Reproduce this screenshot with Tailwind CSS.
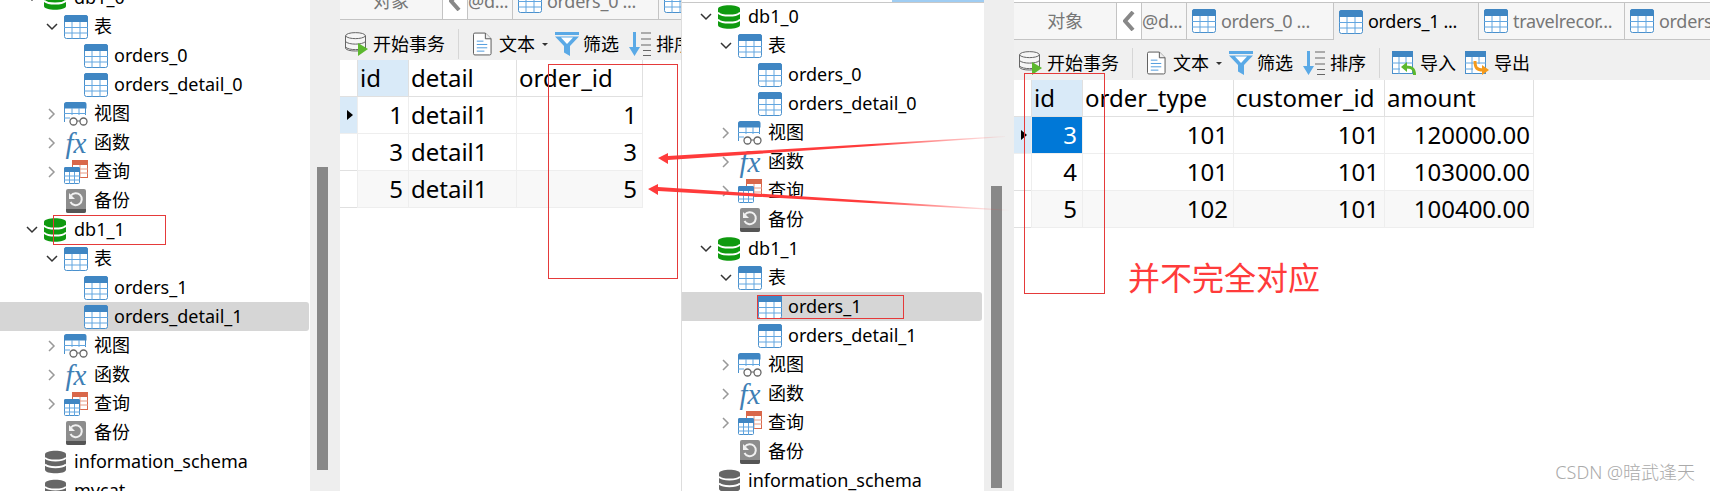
<!DOCTYPE html>
<html>
<head>
<meta charset="utf-8" />
<script src="https://cdn.jsdelivr.net/npm/@tailwindcss/browser@4"></script>
<title>Navicat</title>
</head>
<body class="bg-white">
<svg class="hidden" xmlns="http://www.w3.org/2000/svg">
  <symbol id="tbl" viewBox="0 0 24 24">
    <rect x=".5" y=".5" width="23" height="23" rx="2" fill="#fff" stroke="#4a90cc"/>
    <path d="M0 7V2.500a2.500 2.500 0 0 1 2.500-2.500h19a2.500 2.500 0 0 1 2.500 2.500V7z" fill="#3f86c3"/>
    <path d="M0 12.500h24M0 18h24M8 7v17M16 7v17" stroke="#62a6e0" fill="none"/>
  </symbol>
  <symbol id="db" viewBox="0 0 22 24">
    <path d="M0 4c0-5 22-5 22 0v16c0 5-22 5-22 0z" fill="currentColor"/>
    <path d="M0 7.500c3 4 19 4 22 0M0 14.500c3 4 19 4 22 0" stroke="#fff" stroke-width="2" fill="none"/>
  </symbol>
  <symbol id="view" viewBox="0 0 24 24">
    <path d="M.5 20V3a2 2 0 0 1 2-2h17a2 2 0 0 1 2 2v10" fill="#fff" stroke="#4a90cc"/>
    <path d="M0 6.500V2.500a2.500 2.500 0 0 1 2.500-2.500h18a2 2 0 0 1 2 2v4.500z" fill="#3f86c3"/>
    <path d="M0 11.500h22M0 16h6M8 6v7M15 6v7" stroke="#62a6e0" fill="none"/>
    <circle cx="9.500" cy="19.500" r="3.500" fill="#fff" stroke="#666" stroke-width="1.300"/>
    <circle cx="19.500" cy="19.500" r="3.500" fill="#fff" stroke="#666" stroke-width="1.300"/>
    <path d="M13 19h3" stroke="#666"/>
  </symbol>
  <symbol id="query" viewBox="0 0 24 24">
    <rect x="8.500" y=".5" width="15" height="17" fill="#fff" stroke="#d9674a"/>
    <rect x="8" y="0" width="16" height="5" fill="#d9674a"/>
    <path d="M8 9h16M8 13h16M16 5v13" stroke="#e59a84" fill="none"/>
    <rect x=".5" y="7.500" width="15" height="16" rx="1" fill="#fff" stroke="#4a90cc"/>
    <path d="M0 12V8.500a1.500 1.500 0 0 1 1.500-1.500h13a1.500 1.500 0 0 1 1.500 1.500V12z" fill="#3f86c3"/>
    <path d="M0 16h16M0 20h16M5.500 12v12M10.500 12v12" stroke="#62a6e0" fill="none"/>
  </symbol>
  <symbol id="backup" viewBox="0 0 20 24">
    <rect width="20" height="24" rx="2" fill="#8d8d8d"/>
    <path d="M0 20h20v2a2 2 0 0 1-2 2H2a2 2 0 0 1-2-2z" fill="#555"/>
    <path d="M5 6.500A6 6 0 1 1 4.500 13" stroke="#f1f1f1" stroke-width="2" fill="none"/>
    <path d="M3 4v6h6z" fill="#f1f1f1"/>
  </symbol>
  <symbol id="start" viewBox="0 0 23 24">
    <path d="M.5 4c0-4.500 20-4.500 20 0v12c0 4-20 4-20 0z" fill="#f5f5f5" stroke="#666"/>
    <path d="M.5 4c3 3.500 17 3.500 20 0M.5 9.500c3 3.500 17 3.500 20 0M.5 15c3 3.500 17 3.500 20 0" stroke="#666" fill="none"/>
    <path d="M13 11l10 6-10 7z" fill="#5cb82e"/>
  </symbol>
  <symbol id="doc" viewBox="0 0 20 24">
    <path d="M.5 2a1.500 1.500 0 0 1 1.500-1.500h11l6 6V22a1.500 1.500 0 0 1-1.500 1.500H2A1.500 1.500 0 0 1 .5 22z" fill="#fff" stroke="#555"/>
    <path d="M13 .5v6h6" fill="#eee" stroke="#555"/>
    <path d="M4 9h7M4 12.500h11M4 16h11M4 19.500h8" stroke="#4a98dc" fill="none"/>
  </symbol>
  <symbol id="filter" viewBox="0 0 24 24">
    <path d="M0 0h24v3H0z" fill="#5aa9e6"/>
    <path d="M0 4.500h24L15 14v10l-6-3.500V14z" fill="#5aa9e6"/>
    <path d="M6 5.500h12L12 12z" fill="#fff"/>
  </symbol>
  <symbol id="sort" viewBox="0 0 24 24">
    <path d="M5 0h3v15h4L6.500 24 1 15h4z" fill="#5aa9e6"/>
    <path d="M13 1h10M13 7h10M13 13h10M15 18.500h8M15 23.500h8" stroke="#666" fill="none"/>
  </symbol>
  <symbol id="imp" viewBox="0 0 24 24">
    <rect x=".5" y=".5" width="20" height="22" fill="#fff" stroke="#4a90cc"/>
    <rect width="21" height="6" fill="#3f86c3"/>
    <path d="M0 12h21M0 18h8M7 6v17M14 6v7" stroke="#62a6e0" fill="none"/>
    <path d="M22.500 24c0-6-2-8-9-8" stroke="#5cb82e" stroke-width="3" fill="none"/>
    <path d="M15 11l-6 5 6 5z" fill="#5cb82e"/>
  </symbol>
  <symbol id="exp" viewBox="0 0 24 24">
    <rect x=".5" y=".5" width="20" height="22" fill="#fff" stroke="#4a90cc"/>
    <rect width="21" height="6" fill="#3f86c3"/>
    <path d="M0 12h21M0 18h8M7 6v17M14 6v7" stroke="#62a6e0" fill="none"/>
    <path d="M10 10c0 7 2 9 8 9" stroke="#f59a1b" stroke-width="3" fill="none"/>
    <path d="M17 14l7 5-7 5z" fill="#f59a1b"/>
  </symbol>
  <symbol id="open" viewBox="0 0 12 8"><path d="M1 1l5 5 5-5" stroke="#333" stroke-width="1.500" fill="none"/></symbol>
  <symbol id="closed" viewBox="0 0 8 12"><path d="M1 1l5 5-5 5" stroke="#999" stroke-width="1.500" fill="none"/></symbol>
</svg>

<div class="relative w-[1710px] h-[491px] overflow-hidden flex font-['Noto_Sans','Noto_Sans_CJK_SC',sans-serif] text-black">

  <!-- left tree -->
  <div class="w-[310px] shrink-0 -mt-[17px] text-[18px] whitespace-nowrap">
    <div class="flex items-center h-[29px] pl-[20px]"><span class="w-[24px] flex justify-center"><svg class="w-[12px] h-[8px]"><use href="#open"/></svg></span><svg class="w-[22px] h-[24px] text-[#0f9a0f]"><use href="#db"/></svg><span class="ml-[8px]">db1_0</span></div>
    <div class="flex items-center h-[29px] pl-[40px]"><span class="w-[24px] flex justify-center"><svg class="w-[12px] h-[8px]"><use href="#open"/></svg></span><svg class="w-[24px] h-[24px]"><use href="#tbl"/></svg><span class="ml-[6px]">表</span></div>
    <div class="flex items-center h-[29px] pl-[84px]"><svg class="w-[24px] h-[24px]"><use href="#tbl"/></svg><span class="ml-[6px]">orders_0</span></div>
    <div class="flex items-center h-[29px] pl-[84px]"><svg class="w-[24px] h-[24px]"><use href="#tbl"/></svg><span class="ml-[6px]">orders_detail_0</span></div>
    <div class="flex items-center h-[29px] pl-[40px]"><span class="w-[24px] flex justify-center"><svg class="w-[8px] h-[12px]"><use href="#closed"/></svg></span><svg class="w-[24px] h-[24px]"><use href="#view"/></svg><span class="ml-[6px]">视图</span></div>
    <div class="flex items-center h-[29px] pl-[40px]"><span class="w-[24px] flex justify-center"><svg class="w-[8px] h-[12px]"><use href="#closed"/></svg></span><span class="w-[24px] text-center italic text-[29px] leading-[24px] text-[#3f7fb5] font-['Liberation_Serif',serif]">fx</span><span class="ml-[6px]">函数</span></div>
    <div class="flex items-center h-[29px] pl-[40px]"><span class="w-[24px] flex justify-center"><svg class="w-[8px] h-[12px]"><use href="#closed"/></svg></span><svg class="w-[24px] h-[24px]"><use href="#query"/></svg><span class="ml-[6px]">查询</span></div>
    <div class="flex items-center h-[29px] pl-[66px]"><svg class="w-[20px] h-[24px]"><use href="#backup"/></svg><span class="ml-[8px]">备份</span></div>
    <div class="flex items-center h-[29px] pl-[20px]"><span class="w-[24px] flex justify-center"><svg class="w-[12px] h-[8px]"><use href="#open"/></svg></span><svg class="w-[22px] h-[24px] text-[#0f9a0f]"><use href="#db"/></svg><span class="ml-[8px]">db1_1</span></div>
    <div class="flex items-center h-[29px] pl-[40px]"><span class="w-[24px] flex justify-center"><svg class="w-[12px] h-[8px]"><use href="#open"/></svg></span><svg class="w-[24px] h-[24px]"><use href="#tbl"/></svg><span class="ml-[6px]">表</span></div>
    <div class="flex items-center h-[29px] pl-[84px]"><svg class="w-[24px] h-[24px]"><use href="#tbl"/></svg><span class="ml-[6px]">orders_1</span></div>
    <div class="flex items-center h-[29px] pl-[84px] mr-px rounded-r-[3px] bg-[#d6d6d6]"><svg class="w-[24px] h-[24px]"><use href="#tbl"/></svg><span class="ml-[6px]">orders_detail_1</span></div>
    <div class="flex items-center h-[29px] pl-[40px]"><span class="w-[24px] flex justify-center"><svg class="w-[8px] h-[12px]"><use href="#closed"/></svg></span><svg class="w-[24px] h-[24px]"><use href="#view"/></svg><span class="ml-[6px]">视图</span></div>
    <div class="flex items-center h-[29px] pl-[40px]"><span class="w-[24px] flex justify-center"><svg class="w-[8px] h-[12px]"><use href="#closed"/></svg></span><span class="w-[24px] text-center italic text-[29px] leading-[24px] text-[#3f7fb5] font-['Liberation_Serif',serif]">fx</span><span class="ml-[6px]">函数</span></div>
    <div class="flex items-center h-[29px] pl-[40px]"><span class="w-[24px] flex justify-center"><svg class="w-[8px] h-[12px]"><use href="#closed"/></svg></span><svg class="w-[24px] h-[24px]"><use href="#query"/></svg><span class="ml-[6px]">查询</span></div>
    <div class="flex items-center h-[29px] pl-[66px]"><svg class="w-[20px] h-[24px]"><use href="#backup"/></svg><span class="ml-[8px]">备份</span></div>
    <div class="flex items-center h-[29px] pl-[45px]"><svg class="w-[21px] h-[24px] text-[#666]"><use href="#db"/></svg><span class="ml-[8px]">information_schema</span></div>
    <div class="flex items-center h-[29px] pl-[45px]"><svg class="w-[21px] h-[24px] text-[#666]"><use href="#db"/></svg><span class="ml-[8px]">mycat</span></div>
  </div>
  <div class="w-[30px] shrink-0 bg-[#eeeeee]"><div class="w-[11px] ml-[7px] mt-[167px] h-[303px] bg-[#888888]"></div></div>

  <!-- left data pane -->
  <div class="w-[341px] shrink-0 overflow-hidden -mt-[18px]">
    <div class="flex h-[38px] bg-[#f0f0f0] border-y border-[#c4c4c4] text-[18px] tracking-[-0.3px] whitespace-nowrap">
      <div class="w-[103px] shrink-0 bg-[#f6f6f6] border-r border-[#c4c4c4] flex items-center justify-center text-[#777]">对象</div>
      <div class="w-[25px] shrink-0 bg-white border-r border-[#c4c4c4] flex items-center justify-center"><svg class="w-[12px] h-[20px]" viewBox="0 0 12 20"><path d="M10 1L2 10l8 9" stroke="#888" stroke-width="4" fill="none"/></svg></div>
      <div class="w-[44px] shrink-0 bg-[#f6f6f6] flex items-center text-[#777]">@d...</div>
      <div class="w-[146px] shrink-0 bg-[#f6f6f6] border-l border-[#c4c4c4] flex items-center pl-[5px] text-[#777]"><svg class="w-[24px] h-[24px] mr-[5px]"><use href="#tbl"/></svg>orders_0 ...</div>
      <div class="w-[146px] shrink-0 bg-[#f6f6f6] border-l border-[#c4c4c4] flex items-center pl-[5px]"><svg class="w-[24px] h-[24px]"><use href="#tbl"/></svg></div>
    </div>
    <div class="flex items-center h-[40px] pt-[8px] bg-[#f0f0f0] text-[18px] whitespace-nowrap">
      <svg class="w-[23px] h-[24px] ml-[5px] shrink-0"><use href="#start"/></svg><span class="ml-[5px] shrink-0">开始事务</span>
      <span class="w-px h-[30px] bg-[#d6d6d6] ml-[13px] shrink-0"></span>
      <svg class="w-[19px] h-[24px] ml-[14px] shrink-0"><use href="#doc"/></svg><span class="ml-[7px] shrink-0">文本</span>
      <span class="ml-[7px] shrink-0 border-x-[3px] border-x-transparent border-t-[3px] border-t-[#333]"></span>
      <svg class="w-[24px] h-[24px] ml-[7px] shrink-0"><use href="#filter"/></svg><span class="ml-[4px] shrink-0">筛选</span>
      <svg class="w-[24px] h-[24px] ml-[9px] shrink-0"><use href="#sort"/></svg><span class="ml-[4px] shrink-0">排序</span>
    </div>
    <div class="grid grid-cols-[17px_52px_108px_126px] auto-rows-[37px] text-[24px] leading-[36px] w-max">
      <div class="border-b border-[#e0e0e0] bg-white"></div>
      <div class="border-b border-r border-l border-[#e0e0e0] bg-[#d9eaf8] pl-[2px]">id</div>
      <div class="border-b border-r border-[#e0e0e0] pl-[2px]">detail</div>
      <div class="border-b border-r border-[#e0e0e0] pl-[2px]">order_id</div>

      <div class="border-b border-[#eeeeee] bg-[#d9eaf8] flex items-center pl-[7px]"><span class="border-y-[5px] border-y-transparent border-l-[6px] border-l-black"></span></div>
      <div class="border-b border-r border-l border-[#eeeeee] text-right pr-[5px]">1</div>
      <div class="border-b border-r border-[#eeeeee] pl-[2px]">detail1</div>
      <div class="border-b border-r border-[#eeeeee] text-right pr-[5px]">1</div>

      <div class="border-b border-[#e0e0e0]"></div>
      <div class="border-b border-r border-l border-[#eeeeee] text-right pr-[5px]">3</div>
      <div class="border-b border-r border-[#eeeeee] pl-[2px]">detail1</div>
      <div class="border-b border-r border-[#eeeeee] text-right pr-[5px]">3</div>

      <div class="border-b border-[#e0e0e0]"></div>
      <div class="border-b border-r border-l border-[#eeeeee] bg-[#f8f8f8] text-right pr-[5px]">5</div>
      <div class="border-b border-r border-[#eeeeee] bg-[#f8f8f8] pl-[2px]">detail1</div>
      <div class="border-b border-r border-[#eeeeee] bg-[#f8f8f8] text-right pr-[5px]">5</div>
    </div>
  </div>

  <!-- middle tree -->
  <div class="w-[303px] shrink-0 border-l border-[#dddddd] text-[18px] whitespace-nowrap bg-white overflow-hidden">
    <div class="h-[2px] flex justify-end"><div class="w-[92px] bg-[#9fcdf3]"></div></div>
    <div class="h-px bg-[#c8c8c8] -mb-px"></div>
    <div class="flex items-center h-[29px] pl-[12px]"><span class="w-[24px] flex justify-center"><svg class="w-[12px] h-[8px]"><use href="#open"/></svg></span><svg class="w-[22px] h-[24px] text-[#0f9a0f]"><use href="#db"/></svg><span class="ml-[8px]">db1_0</span></div>
    <div class="flex items-center h-[29px] pl-[32px]"><span class="w-[24px] flex justify-center"><svg class="w-[12px] h-[8px]"><use href="#open"/></svg></span><svg class="w-[24px] h-[24px]"><use href="#tbl"/></svg><span class="ml-[6px]">表</span></div>
    <div class="flex items-center h-[29px] pl-[76px]"><svg class="w-[24px] h-[24px]"><use href="#tbl"/></svg><span class="ml-[6px]">orders_0</span></div>
    <div class="flex items-center h-[29px] pl-[76px]"><svg class="w-[24px] h-[24px]"><use href="#tbl"/></svg><span class="ml-[6px]">orders_detail_0</span></div>
    <div class="flex items-center h-[29px] pl-[32px]"><span class="w-[24px] flex justify-center"><svg class="w-[8px] h-[12px]"><use href="#closed"/></svg></span><svg class="w-[24px] h-[24px]"><use href="#view"/></svg><span class="ml-[6px]">视图</span></div>
    <div class="flex items-center h-[29px] pl-[32px]"><span class="w-[24px] flex justify-center"><svg class="w-[8px] h-[12px]"><use href="#closed"/></svg></span><span class="w-[24px] text-center italic text-[29px] leading-[24px] text-[#3f7fb5] font-['Liberation_Serif',serif]">fx</span><span class="ml-[6px]">函数</span></div>
    <div class="flex items-center h-[29px] pl-[32px]"><span class="w-[24px] flex justify-center"><svg class="w-[8px] h-[12px]"><use href="#closed"/></svg></span><svg class="w-[24px] h-[24px]"><use href="#query"/></svg><span class="ml-[6px]">查询</span></div>
    <div class="flex items-center h-[29px] pl-[58px]"><svg class="w-[20px] h-[24px]"><use href="#backup"/></svg><span class="ml-[8px]">备份</span></div>
    <div class="flex items-center h-[29px] pl-[12px]"><span class="w-[24px] flex justify-center"><svg class="w-[12px] h-[8px]"><use href="#open"/></svg></span><svg class="w-[22px] h-[24px] text-[#0f9a0f]"><use href="#db"/></svg><span class="ml-[8px]">db1_1</span></div>
    <div class="flex items-center h-[29px] pl-[32px]"><span class="w-[24px] flex justify-center"><svg class="w-[12px] h-[8px]"><use href="#open"/></svg></span><svg class="w-[24px] h-[24px]"><use href="#tbl"/></svg><span class="ml-[6px]">表</span></div>
    <div class="flex items-center h-[29px] pl-[76px] mr-[2px] rounded-r-[3px] bg-[#d6d6d6]"><svg class="w-[24px] h-[24px]"><use href="#tbl"/></svg><span class="ml-[6px]">orders_1</span></div>
    <div class="flex items-center h-[29px] pl-[76px]"><svg class="w-[24px] h-[24px]"><use href="#tbl"/></svg><span class="ml-[6px]">orders_detail_1</span></div>
    <div class="flex items-center h-[29px] pl-[32px]"><span class="w-[24px] flex justify-center"><svg class="w-[8px] h-[12px]"><use href="#closed"/></svg></span><svg class="w-[24px] h-[24px]"><use href="#view"/></svg><span class="ml-[6px]">视图</span></div>
    <div class="flex items-center h-[29px] pl-[32px]"><span class="w-[24px] flex justify-center"><svg class="w-[8px] h-[12px]"><use href="#closed"/></svg></span><span class="w-[24px] text-center italic text-[29px] leading-[24px] text-[#3f7fb5] font-['Liberation_Serif',serif]">fx</span><span class="ml-[6px]">函数</span></div>
    <div class="flex items-center h-[29px] pl-[32px]"><span class="w-[24px] flex justify-center"><svg class="w-[8px] h-[12px]"><use href="#closed"/></svg></span><svg class="w-[24px] h-[24px]"><use href="#query"/></svg><span class="ml-[6px]">查询</span></div>
    <div class="flex items-center h-[29px] pl-[58px]"><svg class="w-[20px] h-[24px]"><use href="#backup"/></svg><span class="ml-[8px]">备份</span></div>
    <div class="flex items-center h-[29px] pl-[37px]"><svg class="w-[21px] h-[24px] text-[#666]"><use href="#db"/></svg><span class="ml-[8px]">information_schema</span></div>
  </div>
  <div class="w-[30px] shrink-0 bg-[#eeeeee]"><div class="w-[11px] ml-[7px] mt-[186px] h-[302px] bg-[#888888]"></div></div>

  <!-- right data pane -->
  <div class="flex-1 min-w-0 overflow-hidden pt-[2px]">
    <div class="flex h-[38px] bg-[#f0f0f0] border-y border-[#c4c4c4] text-[18px] tracking-[-0.3px] whitespace-nowrap">
      <div class="w-[103px] shrink-0 bg-[#f6f6f6] border-r border-[#c4c4c4] flex items-center justify-center text-[#777]">对象</div>
      <div class="w-[25px] shrink-0 bg-white border-r border-[#c4c4c4] flex items-center justify-center"><svg class="w-[12px] h-[20px]" viewBox="0 0 12 20"><path d="M10 1L2 10l8 9" stroke="#888" stroke-width="4" fill="none"/></svg></div>
      <div class="w-[44px] shrink-0 bg-[#f6f6f6] flex items-center text-[#777]">@d...</div>
      <div class="w-[147px] shrink-0 bg-[#f6f6f6] border-l border-[#c4c4c4] flex items-center pl-[5px] text-[#777]"><svg class="w-[24px] h-[24px] mr-[5px]"><use href="#tbl"/></svg>orders_0 ...</div>
      <div class="w-[146px] shrink-0 bg-[#f0f0f0] border-x border-[#c4c4c4] -mb-px flex items-center pl-[5px]"><svg class="w-[24px] h-[24px] mr-[5px]"><use href="#tbl"/></svg>orders_1 ...</div>
      <div class="w-[145px] shrink-0 bg-[#f6f6f6] flex items-center pl-[5px] text-[#777]"><svg class="w-[24px] h-[24px] mr-[5px]"><use href="#tbl"/></svg>travelrecor...</div>
      <div class="flex-1 bg-[#f6f6f6] border-l border-[#c4c4c4] flex items-center pl-[5px] text-[#777] overflow-hidden"><svg class="w-[24px] h-[24px] mr-[5px] shrink-0"><use href="#tbl"/></svg>orders</div>
    </div>
    <div class="flex items-center h-[40px] pt-[6px] bg-[#f0f0f0] text-[18px] whitespace-nowrap">
      <svg class="w-[23px] h-[24px] ml-[5px]"><use href="#start"/></svg><span class="ml-[5px]">开始事务</span>
      <span class="w-px h-[30px] bg-[#d6d6d6] ml-[13px]"></span>
      <svg class="w-[19px] h-[24px] ml-[14px]"><use href="#doc"/></svg><span class="ml-[7px]">文本</span>
      <span class="ml-[7px] border-x-[3px] border-x-transparent border-t-[3px] border-t-[#333]"></span>
      <svg class="w-[24px] h-[24px] ml-[7px]"><use href="#filter"/></svg><span class="ml-[4px]">筛选</span>
      <svg class="w-[24px] h-[24px] ml-[9px]"><use href="#sort"/></svg><span class="ml-[4px]">排序</span>
      <span class="w-px h-[30px] bg-[#d6d6d6] ml-[13px]"></span>
      <svg class="w-[24px] h-[24px] ml-[12px]"><use href="#imp"/></svg><span class="ml-[4px]">导入</span>
      <svg class="w-[24px] h-[24px] ml-[9px]"><use href="#exp"/></svg><span class="ml-[5px]">导出</span>
    </div>
    <div class="grid grid-cols-[17px_52px_151px_151px_149px] auto-rows-[37px] text-[24px] leading-[36px] w-max">
      <div class="border-b border-[#e0e0e0]"></div>
      <div class="border-b border-r border-l border-[#e0e0e0] bg-[#d9eaf8] pl-[2px]">id</div>
      <div class="border-b border-r border-[#e0e0e0] pl-[2px]">order_type</div>
      <div class="border-b border-r border-[#e0e0e0] pl-[2px]">customer_id</div>
      <div class="border-b border-r border-[#e0e0e0] pl-[2px]">amount</div>

      <div class="border-b border-[#eeeeee] bg-[#d9eaf8] flex items-center pl-[7px]"><span class="border-y-[5px] border-y-transparent border-l-[6px] border-l-black"></span></div>
      <div class="border-b border-r border-l border-[#eeeeee] bg-[#0078d7] text-white text-right pr-[5px]">3</div>
      <div class="border-b border-r border-[#eeeeee] text-right pr-[5px]">101</div>
      <div class="border-b border-r border-[#eeeeee] text-right pr-[5px]">101</div>
      <div class="border-b border-r border-[#eeeeee] text-right pr-[3px]">120000.00</div>

      <div class="border-b border-[#e0e0e0]"></div>
      <div class="border-b border-r border-l border-[#eeeeee] text-right pr-[5px]">4</div>
      <div class="border-b border-r border-[#eeeeee] text-right pr-[5px]">101</div>
      <div class="border-b border-r border-[#eeeeee] text-right pr-[5px]">101</div>
      <div class="border-b border-r border-[#eeeeee] text-right pr-[3px]">103000.00</div>

      <div class="border-b border-[#e0e0e0]"></div>
      <div class="border-b border-r border-l border-[#eeeeee] bg-[#f8f8f8] text-right pr-[5px]">5</div>
      <div class="border-b border-r border-[#eeeeee] bg-[#f8f8f8] text-right pr-[5px]">102</div>
      <div class="border-b border-r border-[#eeeeee] bg-[#f8f8f8] text-right pr-[5px]">101</div>
      <div class="border-b border-r border-[#eeeeee] bg-[#f8f8f8] text-right pr-[3px]">100400.00</div>
    </div>
    <div class="ml-[114px] mt-[30px] text-[32px] leading-[40px] text-[#ff3b3b]">并不完全对应</div>
  </div>

  <!-- annotations drawn over the screenshots -->
  <svg class="absolute inset-0 w-[1710px] h-[491px] pointer-events-none" xmlns="http://www.w3.org/2000/svg">
    <defs>
      <linearGradient id="fade" gradientUnits="userSpaceOnUse" x1="660" y1="0" x2="1010" y2="0">
        <stop offset="0.6" stop-color="#ff3b3b"/>
        <stop offset="1" stop-color="#ff3b3b" stop-opacity="0"/>
      </linearGradient>
    </defs>
    <polygon points="658,158 668,153 668,156 1005,136 1005,137 668,160 668,164" fill="url(#fade)"/>
    <polygon points="648,189 658,184 658,187 1012,210 1012,211 658,191 658,195" fill="url(#fade)"/>
  </svg>
  <div class="absolute left-[53px] top-[215px] w-[113px] h-[30px] border border-[#e53a3a]"></div>
  <div class="absolute left-[548px] top-[64px] w-[130px] h-[215px] border border-[#e53a3a]"></div>
  <div class="absolute left-[757px] top-[295px] w-[147px] h-[24px] border border-[#e53a3a]"></div>
  <div class="absolute left-[1024px] top-[73px] w-[81px] h-[221px] border border-[#e53a3a]"></div>
  <div class="absolute right-[15px] bottom-[7px] text-[18px] leading-[24px] text-[#aaaaaa] font-light">CSDN @暗武逢天</div>
</div>
</body>
</html>
